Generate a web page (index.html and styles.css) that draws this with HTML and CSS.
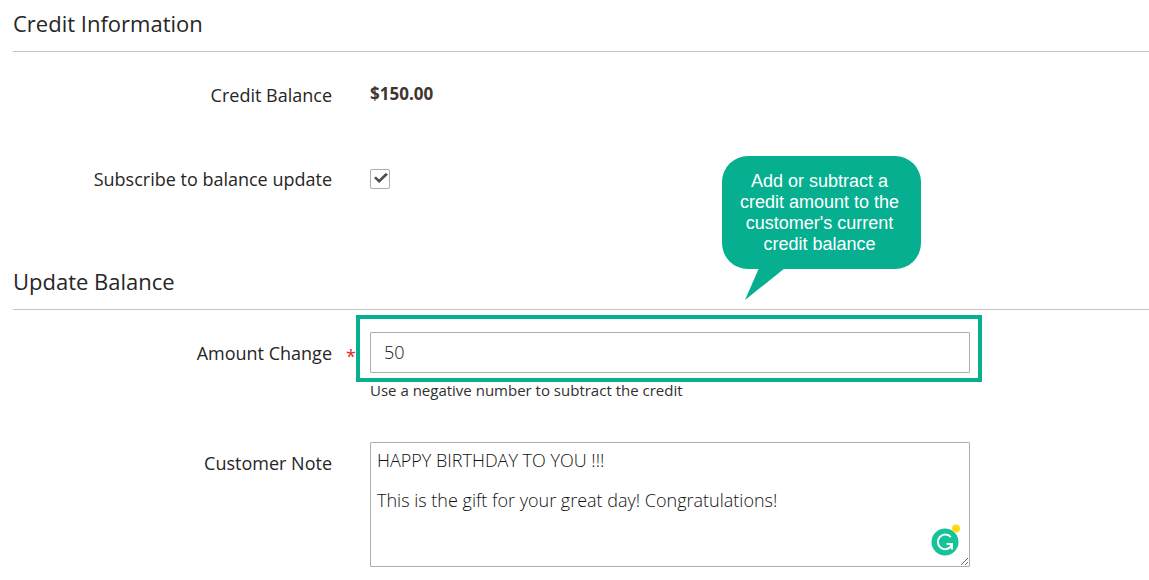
FILE: index.html
```html
<!DOCTYPE html>
<html lang="en">
<head>
<meta charset="UTF-8" />
<meta name="viewport" content="width=device-width, initial-scale=1" />
<title>Customer Credit</title>
<link rel="stylesheet" href="styles.css">
</head>
<body>

<form id="creditForm">
  <section class="fieldset">
    <h2>Credit Information</h2>

    <div class="field">
      <span class="label">Credit Balance</span>
      <div class="control">
        <strong class="balance">$150.00</strong>
      </div>
    </div>

    <div class="field">
      <label class="label" for="subscribe">Subscribe to balance update</label>
      <div class="control">
        <input type="checkbox" id="subscribe" name="subscribe" checked />
      </div>
    </div>
  </section>

  <section class="fieldset">
    <h2>Update Balance</h2>

    <div class="field">
      <label class="label required" for="amount">Amount Change</label>
      <div class="control">
        <div class="highlight">
          <input type="text" id="amount" name="amount" value="50" required />
          <div class="balloon">
            Add or subtract a credit amount to the customer's current credit balance
            <svg class="tail" width="40" height="32" viewBox="0 0 40 32"><path d="M14 0 L0 32 L40 0 Z" fill="#06af90" /></svg>
          </div>
        </div>
        <p class="hint">Use a negative number to subtract the credit</p>
      </div>
    </div>

    <div class="field">
      <label class="label" for="note">Customer Note</label>
      <div class="control note">
        <textarea id="note" name="note" spellcheck="false">HAPPY BIRTHDAY TO YOU !!!

This is the gift for your great day! Congratulations!</textarea>
        <svg class="checker" width="30" height="32" viewBox="0 0 30 32">
          <circle cx="14" cy="18" r="13.5" fill="#15c39a" />
          <path d="M19.8 13.2 A7.3 7.3 0 1 0 20.5 21.5 M15.5 20 H21 V25.5" fill="none" stroke="#fff" stroke-width="2" />
          <circle cx="25" cy="4.5" r="4" fill="#ffd918" />
        </svg>
      </div>
    </div>
  </section>
</form>

</body>
</html>
```

FILE: styles.css
```css
* {
  box-sizing: border-box;
}
body {
  margin: 0;
  padding-left: 13px;
  font-family: "Open Sans", sans-serif;
  font-size: 18px;
  line-height: 20px;
  color: #262626;
  background: #fff;
}
.fieldset {
  padding-bottom: 16px;
}
.fieldset:last-child {
  padding-bottom: 0;
}
h2 {
  margin: 0 0 22px;
  padding: 8px 0 13px;
  border-bottom: 1px solid #cac3b4;
  font-size: 22px;
  font-weight: 500;
  line-height: 30px;
}
.field {
  display: grid;
  grid-template-columns: 357fr 600fr 179fr;
  margin-bottom: 43px;
}
.fieldset:last-child .field:last-child {
  margin-bottom: 13px;
}
.label {
  position: relative;
  padding: 11px 38px 0 0;
  font-weight: 500;
  text-align: right;
}
.required::after {
  content: "*";
  position: absolute;
  right: 14px;
  top: 14px;
  color: #e22626;
}
.control {
  min-height: 41px;
}
.balance {
  display: block;
  padding-top: 10px;
  font-size: 17px;
  font-weight: 700;
  color: #41362f;
}
input[type="checkbox"] {
  appearance: none;
  display: block;
  width: 20px;
  height: 20px;
  margin: 11px 0 0;
  border: 1px solid #adadad;
  border-radius: 2px;
  background: #fff;
}
input[type="checkbox"]:checked::before {
  content: "";
  display: block;
  width: 14px;
  height: 11px;
  margin: 3px 0 0 3px;
  background: #514943;
  clip-path: polygon(0 45%, 14% 32%, 36% 60%, 84% 0, 100% 14%, 37% 92%);
}
input[type="text"],
textarea {
  display: block;
  width: 100%;
  border: 1px solid #adadad;
  border-radius: 1px;
  background: #fff;
  color: #111;
  font: inherit;
  font-weight: 300;
}
input[type="text"] {
  height: 41px;
  padding: 0 13px 2px;
}
textarea {
  height: 125px;
  padding: 7px 6px;
  resize: both;
}
.hint {
  margin: 8px 0 0;
  font-size: 15px;
  line-height: 18px;
  color: #303030;
}

/* green frame and speech balloon over the amount field */
.highlight {
  position: relative;
}
.highlight::before {
  content: "";
  position: absolute;
  inset: -17px -12px -9px -14px;
  border: 4px solid #06af90;
  pointer-events: none;
}
.balloon {
  position: absolute;
  left: 352px;
  bottom: 104px;
  width: 199px;
  padding: 15px 18px 14px 14px;
  border-radius: 26px;
  background: #06af90;
  color: #fff;
  font-family: "Liberation Sans", Arial, sans-serif;
  font-size: 18px;
  line-height: 21px;
  text-align: center;
}
.tail {
  position: absolute;
  left: 23px;
  top: 112px;
}

.note {
  position: relative;
}
.checker {
  position: absolute;
  right: 9px;
  bottom: 11px;
}
```
